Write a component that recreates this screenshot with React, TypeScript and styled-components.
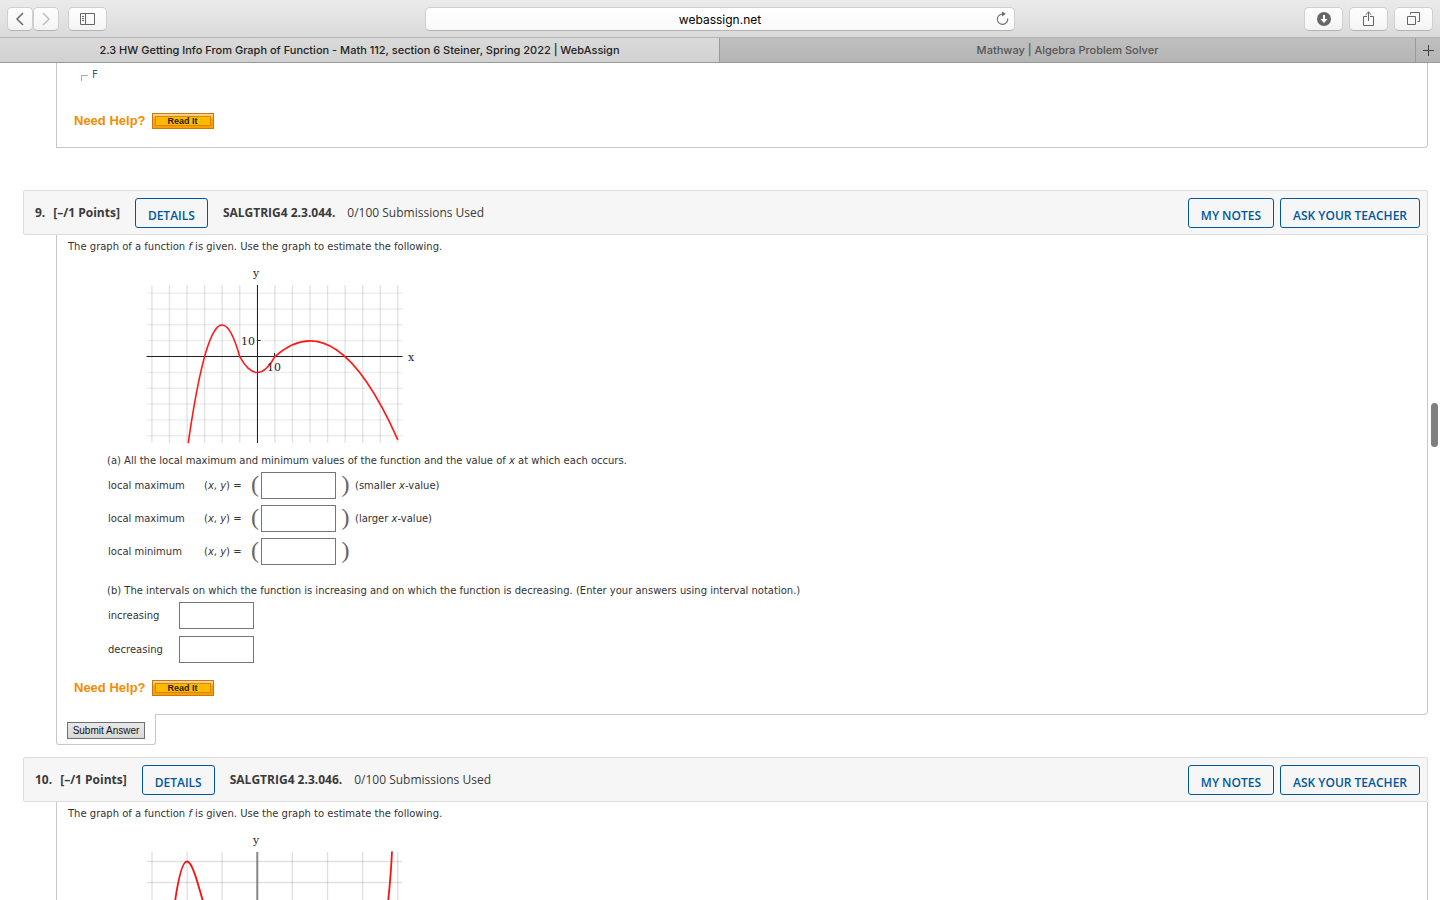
import React from "react";
import styled, { createGlobalStyle } from "styled-components";

const GlobalStyle = createGlobalStyle`
  *, *::before, *::after { box-sizing: border-box; }
  html, body { margin: 0; padding: 0; }
  body { background: #fff; color: #333; font: 10px/18px Verdana, "DejaVu Sans", sans-serif; }
  button, input { font: inherit; color: inherit; margin: 0; }
  a { text-decoration: none; color: inherit; }
  h2, p { margin: 0; font-size: inherit; font-weight: inherit; }
`;

const Window = styled.div`
  position: relative;
  display: flex;
  flex-direction: column;
  height: 100vh;
  overflow: hidden;
`;

/* ---------- browser chrome ---------- */

const Toolbar = styled.header`
  flex: none;
  display: grid;
  grid-template-columns: 1fr minmax(0, 590px) 1fr;
  align-items: center;
  height: 38px;
  padding: 0 7px;
  background: linear-gradient(#ebebeb, #dadada);
  border-bottom: 1px solid #b4b4b4;
`;

const ToolGroup = styled.div<{ $gap: number; $end?: boolean }>`
  display: flex;
  gap: ${(p) => p.$gap}px;
  justify-content: ${(p) => (p.$end ? "flex-end" : "flex-start")};
`;

const ToolButton = styled.button<{ $narrow?: boolean }>`
  display: flex;
  align-items: center;
  justify-content: center;
  width: ${(p) => (p.$narrow ? 26 : 39)}px;
  height: 24px;
  padding: 0;
  background: linear-gradient(#fff, #f3f3f3);
  border: 1px solid #cfcfcf;
  border-bottom-color: #b3b3b3;
  border-radius: 5px;
`;

const AddressBar = styled.div`
  display: grid;
  grid-template-columns: 24px 1fr 24px;
  align-items: center;
  height: 24px;
  background: linear-gradient(#fff, #f9f9f9);
  border: 1px solid #cfcfcf;
  border-bottom-color: #b3b3b3;
  border-radius: 5px;
`;

const AddressInput = styled.input`
  grid-column: 2;
  width: 100%;
  padding: 2px 0 0;
  border: 0;
  background: none;
  outline: 0;
  text-align: center;
  font: 12px/16px Inter, sans-serif;
  color: #000;
`;

const ReloadButton = styled.button`
  display: flex;
  align-items: center;
  justify-content: center;
  padding: 0;
  border: 0;
  background: none;
`;

const TabBar = styled.nav`
  flex: none;
  display: grid;
  grid-template-columns: 720fr 696fr 24px;
  height: 25px;
  border-bottom: 1px solid #989898;
`;

const Tab = styled.a<{ $active?: boolean }>`
  display: block;
  text-align: center;
  white-space: nowrap;
  overflow: hidden;
  font: 500 11px/24px Inter, sans-serif;
  color: ${(p) => (p.$active ? "#222" : "#555")};
  background: ${(p) => (p.$active ? "linear-gradient(#dadada, #d1d1d1)" : "linear-gradient(#bfbfbf, #b5b5b5)")};
  border-right: 1px solid #999;
`;

const NewTab = styled.button`
  display: flex;
  align-items: center;
  justify-content: center;
  padding: 0;
  border: 0;
  background: linear-gradient(#bfbfbf, #b5b5b5);
`;

const ScrollThumb = styled.div`
  position: absolute;
  right: 2px;
  top: 403px;
  width: 7px;
  height: 44px;
  border-radius: 4px;
  background: #7f7f7f;
`;

/* ---------- assignment ---------- */

const Page = styled.main`
  flex: 1;
  min-height: 0;
  overflow: hidden;
  padding: 0 12px 0 23px;
`;

const Question = styled.section`
  margin-bottom: 12px;
`;

const QuestionHeader = styled.div`
  display: flex;
  align-items: center;
  justify-content: space-between;
  height: 45px;
  padding: 0 7px 0 11px;
  background: #f6f6f6;
  border: 1px solid #dcdcdc;
  border-radius: 2px;
  font: 12px/18px "Open Sans", sans-serif;
  color: #3a3a3a;
`;

const HeaderInfo = styled.div`
  display: flex;
  align-items: center;
  gap: 15px;
`;

const Title = styled.h2`
  display: flex;
  gap: 8px;
  font-weight: 700;
`;

const Submissions = styled.div`
  display: flex;
  gap: 12px;
`;

const Actions = styled.div`
  display: flex;
  gap: 6px;
`;

const OutlineButton = styled.button`
  height: 30px;
  padding: 7px 12px 0;
  background: transparent;
  border: 1px solid #00589c;
  border-radius: 3px;
  color: #00589c;
  font: 600 12px/18px "Open Sans", sans-serif;
`;

const Panel = styled.div`
  margin-left: 33px;
  padding: 3px 11px 18px;
  border: 1px solid #c8c8c8;
  border-top: 0;
  border-radius: 0 0 4px 0;
`;

const PreviousPanel = styled(Panel)`
  margin-bottom: 42px;
`;

const ChoiceRow = styled.div`
  display: flex;
  align-items: center;
  gap: 4px;
  height: 18px;
  padding-left: 13px;
  margin-bottom: 29px;
  color: #2c5a88;
`;

const PadCorner = styled.span`
  width: 7px;
  height: 6px;
  margin-top: 6px;
  border-top: 1px solid #aaa;
  border-left: 1px solid #aaa;
`;

const Figure = styled.svg`
  display: block;
  margin-left: 72px;
`;

const Parts = styled.div`
  margin-left: 39px;
`;

const Part = styled.div`
  margin-bottom: 17px;
`;

const PointRow = styled.div`
  display: grid;
  grid-template-columns: 96px 47px 10px 75px 19px auto;
  align-items: center;
  justify-content: start;
  height: 27px;
  margin: 2px 0 6px 1px;
`;

const Paren = styled.span<{ $close?: boolean }>`
  padding-bottom: 3px;
  text-align: ${(p) => (p.$close ? "center" : "left")};
  font: 24px/24px "Liberation Serif", serif;
  color: #666;
`;

const IntervalRow = styled.div`
  display: grid;
  grid-template-columns: 71px 75px;
  align-items: center;
  height: 27px;
  margin: 2px 0 7px 1px;
`;

const AnswerInput = styled.input`
  width: 75px;
  height: 27px;
  padding: 2px 4px;
  background: #fff;
  border: 1px solid #767676;
`;

const HelpRow = styled.div`
  display: flex;
  align-items: center;
  gap: 6px;
  padding-left: 6px;
`;

const HelpLabel = styled.span`
  font: 700 13px/16px "Liberation Sans", Arial, sans-serif;
  color: #f68b00;
`;

const ReadItButton = styled.button`
  width: 62px;
  height: 16px;
  padding: 2px;
  background: linear-gradient(#ffd9a0, #ff9d00 40%);
  border: 1px solid #c87a10;
  font: 700 9px/10px "Liberation Sans", Arial, sans-serif;
  color: #2a1a00;

  span {
    display: block;
    height: 10px;
    line-height: 9px;
    background: #ffb900;
    border: 1px solid #d08a10;
  }
`;

const SubmitTab = styled.div`
  position: relative;
  width: 100px;
  height: 31px;
  margin: -1px 0 0 33px;
  padding: 8px 10px;
  background: #fff;
  border: 1px solid #c8c8c8;
  border-top: 0;
  border-radius: 0 0 3px 3px;
`;

const SubmitButton = styled.button`
  display: block;
  width: 78px;
  height: 17px;
  padding: 0;
  background: linear-gradient(#e8e8e8, #d8d8d8);
  border: 1px solid #6f6f6f;
  font: 10px/14px "Liberation Sans", Arial, sans-serif;
  white-space: nowrap;
  color: #111;
`;

/* ---------- graph drawing ---------- */

type Pt = [number, number];
type Parabola = { a: number; h: number; k: number; from: number; to: number };

/* An arc of y = a(x - h)^2 + k is exactly one quadratic Bezier. */
const arcPath = (arcs: Parabola[], map: (x: number, y: number) => Pt) =>
  arcs
    .map(({ a, h, k, from, to }, i) => {
      const f = (x: number) => a * (x - h) ** 2 + k;
      const mid = (from + to) / 2;
      const cy = f(from) + 2 * a * (from - h) * (mid - from);
      const start = i === 0 ? `M${map(from, f(from)).join(" ")}` : "";
      return `${start} Q${map(mid, cy).join(" ")} ${map(to, f(to)).join(" ")}`;
    })
    .join(" ");

const range = (from: number, to: number) => Array.from({ length: to - from + 1 }, (_, i) => from + i);

const GraphText = ({ x, y, children }: { x: number; y: number; children: string }) => (
  <text x={x} y={y} fontFamily='"DejaVu Serif", serif' fontSize="11" fill="#222">
    {children}
  </text>
);

const GraphOne = () => (
  <Figure width="290" height="196" role="img" aria-label="Graph of f">
    <g stroke="#000" strokeOpacity="0.11" strokeWidth="1.4">
      {range(-6, 8).map((n) => (
        <line key={n} x1={117.3 + n * 17.57} x2={117.3 + n * 17.57} y1="29" y2="187" />
      ))}
    </g>
    <g stroke="#000" strokeOpacity="0.07" strokeWidth="1.4">
      {range(-5, 4).map((n) => (
        <line key={n} x1="7" x2="263" y1={100.5 - n * 15.85} y2={100.5 - n * 15.85} />
      ))}
    </g>
    <path d="M6.500 100.500H262.500M117.500 29V187M117.500 84.500h3M134.500 97v3" stroke="#222" fill="none" />
    <path
      d={arcPath(
        [
          { a: -0.2, h: -20, k: 20, from: -39.3, to: -10 },
          { a: 0.1, h: 0, k: -10, from: -10, to: 10 },
          { a: -0.025, h: 30, k: 10, from: 10, to: 80 },
        ],
        (x, y) => [117.3 + x * 1.757, 100.7 - y * 1.585],
      )}
      fill="none"
      stroke="#ff1a1a"
      strokeWidth="1.6"
    />
    <GraphText x={113} y={21}>y</GraphText>
    <GraphText x={268} y={105}>x</GraphText>
    <GraphText x={101} y={89}>10</GraphText>
    <GraphText x={127} y={115}>10</GraphText>
  </Figure>
);

const GraphTwo = () => (
  <Figure width="290" height="196" role="img" aria-label="Graph of f">
    <g stroke="#000" strokeOpacity="0.12" strokeWidth="1.4">
      {range(-3, 4).map((n) => (
        <line key={n} x1={117.3 + n * 35.1} x2={117.3 + n * 35.1} y1="29" y2="187" />
      ))}
      {range(0, 7).map((n) => (
        <line key={n} x1="7" x2="262" y1={38.5 + n * 21} y2={38.5 + n * 21} />
      ))}
    </g>
    <path d="M117.300 29V187" stroke="#888" strokeWidth="2" />
    <path
      d="M34.500 82C38 57 42 38.500 47 38.500S57 57 64 82M252 28.500C251 50 249.500 66 247.500 84"
      fill="none"
      stroke="#ff1010"
      strokeWidth="1.8"
    />
    <GraphText x={113} y={21}>y</GraphText>
  </Figure>
);

/* ---------- pieces ---------- */

const NeedHelp = () => (
  <HelpRow>
    <HelpLabel>Need Help?</HelpLabel>
    <ReadItButton type="button">
      <span>Read It</span>
    </ReadItButton>
  </HelpRow>
);

const Header = ({ number, code }: { number: string; code: string }) => (
  <QuestionHeader>
    <HeaderInfo>
      <Title>
        <span>{number}</span>
        <span>[–/1 Points]</span>
      </Title>
      <OutlineButton type="button">DETAILS</OutlineButton>
      <Submissions>
        <strong>{code}</strong>
        <span>0/100 Submissions Used</span>
      </Submissions>
    </HeaderInfo>
    <Actions>
      <OutlineButton type="button">MY NOTES</OutlineButton>
      <OutlineButton type="button">ASK YOUR TEACHER</OutlineButton>
    </Actions>
  </QuestionHeader>
);

const Intro = () => (
  <p>
    The graph of a function <i>f</i> is given. Use the graph to estimate the following.
  </p>
);

const Point = ({ id, label, note }: { id: string; label: string; note?: string }) => (
  <PointRow>
    <label htmlFor={id}>{label}</label>
    <span>
      (<i>x</i>, <i>y</i>) =
    </span>
    <Paren>(</Paren>
    <AnswerInput id={id} type="text" />
    <Paren $close>)</Paren>
    {note && (
      <span>
        ({note} <i>x</i>-value)
      </span>
    )}
  </PointRow>
);

const Interval = ({ label }: { label: string }) => (
  <IntervalRow>
    <label htmlFor={label}>{label}</label>
    <AnswerInput id={label} type="text" />
  </IntervalRow>
);

export default function App() {
  return (
    <Window>
      <GlobalStyle />
      <Toolbar>
        <ToolGroup $gap={9}>
          <ToolGroup $gap={0}>
            <ToolButton $narrow type="button" aria-label="Back">
              <svg width="8" height="14" fill="none" stroke="#666" strokeWidth="1.5"><path d="M7 1L1 7l6 6" /></svg>
            </ToolButton>
            <ToolButton $narrow type="button" aria-label="Forward">
              <svg width="8" height="14" fill="none" stroke="#c0c0c0" strokeWidth="1.5"><path d="M1 1l6 6-6 6" /></svg>
            </ToolButton>
          </ToolGroup>
          <ToolButton type="button" aria-label="Show sidebar">
            <svg width="15" height="12" fill="none" stroke="#666"><path d="M.5.5h14v11H.5zM5.500.5v11M2 3.500h2M2 5.500h2M2 7.500h2" /></svg>
          </ToolButton>
        </ToolGroup>
        <AddressBar>
          <AddressInput type="text" aria-label="Address" defaultValue="webassign.net" />
          <ReloadButton type="button" aria-label="Reload">
            <svg width="13" height="15" fill="none" stroke="#707070" strokeWidth="1.1">
              <path d="M11.700 7.500A5.200 5.200 0 1 1 6.500 3H8.500" />
              <path d="M6 .3L9.800 3 6 5.600z" fill="#707070" stroke="none" />
            </svg>
          </ReloadButton>
        </AddressBar>
        <ToolGroup $gap={6} $end>
          <ToolButton type="button" aria-label="Downloads">
            <svg width="14" height="14"><circle cx="7" cy="7" r="7" fill="#666" /><path d="M6 3h2v4h2.500L7 11 3.500 7H6z" fill="#fff" /></svg>
          </ToolButton>
          <ToolButton type="button" aria-label="Share">
            <svg width="11" height="16" fill="none" stroke="#666"><path d="M4 5.500H.5v9h10v-9H7M5.500 10V1M2.700 3.700L5.500 1l2.800 2.700" /></svg>
          </ToolButton>
          <ToolButton type="button" aria-label="Show all tabs">
            <svg width="13" height="13" fill="none" stroke="#666"><path d="M.5 4.500h8v8h-8zM3.500 2.500v-2h9v9h-2" /></svg>
          </ToolButton>
        </ToolGroup>
      </Toolbar>
      <TabBar>
        <Tab href="#assignment" $active>
          2.3 HW Getting Info From Graph of Function - Math 112, section 6 Steiner, Spring 2022 | WebAssign
        </Tab>
        <Tab href="#mathway">Mathway | Algebra Problem Solver</Tab>
        <NewTab type="button" aria-label="New tab">
          <svg width="11" height="11" stroke="#444"><path d="M5.500 0v11M0 5.500h11" /></svg>
        </NewTab>
      </TabBar>

      <Page id="assignment">
        <PreviousPanel>
          <ChoiceRow>
            <PadCorner />
            F
          </ChoiceRow>
          <NeedHelp />
        </PreviousPanel>

        <Question>
          <Header number="9." code="SALGTRIG4 2.3.044." />
          <Panel>
            <Intro />
            <GraphOne />
            <Parts>
              <Part>
                <p>
                  (a) All the local maximum and minimum values of the function and the value of <i>x</i> at which each
                  occurs.
                </p>
                <Point id="max-small" label="local maximum" note="smaller" />
                <Point id="max-large" label="local maximum" note="larger" />
                <Point id="min" label="local minimum" />
              </Part>
              <Part>
                <p>
                  (b) The intervals on which the function is increasing and on which the function is decreasing. (Enter
                  your answers using interval notation.)
                </p>
                <Interval label="increasing" />
                <Interval label="decreasing" />
              </Part>
            </Parts>
            <NeedHelp />
          </Panel>
          <SubmitTab>
            <SubmitButton type="submit">Submit Answer</SubmitButton>
          </SubmitTab>
        </Question>

        <Question>
          <Header number="10." code="SALGTRIG4 2.3.046." />
          <Panel>
            <Intro />
            <GraphTwo />
          </Panel>
        </Question>
      </Page>
      <ScrollThumb />
    </Window>
  );
}
